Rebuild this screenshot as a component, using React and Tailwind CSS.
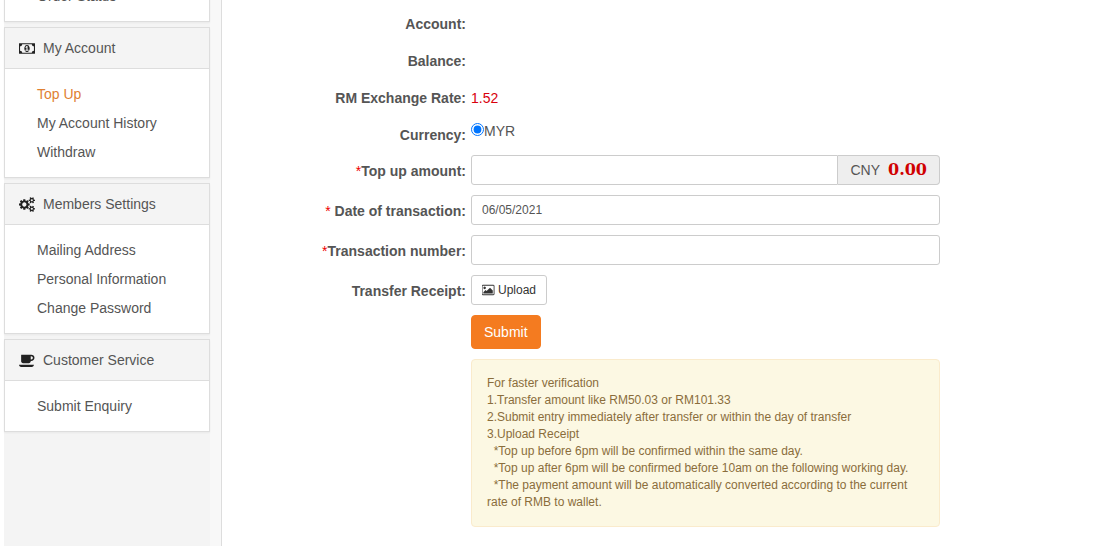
import React from 'react';

const icons = {
  money:
    'M768 1152h384v-96h-128v-448h-114l-148 137 77 80q42-37 55-57h2v288h-128v96zM1280 896q0 70-21 142t-59.5 134-101.5 101-138 39-138-39-101.5-101-59.5-134-21-142 21-142 59.5-134 101.5-101 138-39 138 39 101.5 101 59.5 134 21 142zM1792 1152v-512q-106 0-181-75t-75-181h-1152q0 106-75 181t-181 75v512q106 0 181 75t75 181h1152q0-106 75-181t181-75zM1920 320v1152q0 26-19 45t-45 19h-1792q-26 0-45-19t-19-45v-1152q0-26 19-45t45-19h1792q26 0 45 19t19 45z',
  cogs:
    'M896 896q0-106-75-181t-181-75-181 75-75 181 75 181 181 75 181-75 75-181zm768 512q0-52-38-90t-90-38-90 38-38 90q0 53 37.5 90.5t90.5 37.5 90.5-37.5 37.5-90.5zm0-1024q0-52-38-90t-90-38-90 38-38 90q0 53 37.5 90.5t90.5 37.5 90.5-37.5 37.5-90.5zm-384 421v185q0 10-7 19.5t-16 10.5l-155 24q-11 35-32 76 34 48 90 115 7 11 7 20 0 12-7 19-23 30-82.5 89.5t-78.5 59.5q-11 0-21-7l-115-90q-37 19-77 31-11 108-23 155-7 24-30 24h-186q-11 0-20-7.5t-10-17.5l-23-153q-34-10-75-31l-118 89q-7 7-20 7-11 0-21-8-144-133-144-160 0-9 7-19 10-14 41-53t47-61q-23-44-35-82l-152-24q-10-1-17-9.5t-7-19.5v-185q0-10 7-19.5t16-10.5l155-24q11-35 32-76-34-48-90-115-7-11-7-20 0-12 7-20 22-30 82-89t79-59q11 0 21 7l115 90q34-18 77-32 11-108 23-154 7-24 30-24h186q11 0 20 7.5t10 17.5l23 153q34 10 75 31l118-89q8-7 20-7 11 0 21 8 144 133 144 160 0 8-7 19-12 16-42 54t-45 60q23 48 34 82l152 23q10 2 17 10.5t7 19.5zm640 533v140q0 16-149 31-12 27-30 52 51 113 51 138 0 4-4 7-122 71-124 71-8 0-46-47t-52-68q-20 2-30 2t-30-2q-14 21-52 68t-46 47q-2 0-124-71-4-3-4-7 0-25 51-138-18-25-30-52-149-15-149-31v-140q0-16 149-31 13-29 30-52-51-113-51-138 0-4 4-7 4-2 35-20t59-34 30-16q8 0 46 46.5t52 67.5q20-2 30-2t30 2q51-71 92-112l6-2q4 0 124 70 4 3 4 7 0 25-51 138 17 23 30 52 149 15 149 31zm0-1024v140q0 16-149 31-12 27-30 52 51 113 51 138 0 4-4 7-122 71-124 71-8 0-46-47t-52-68q-20 2-30 2t-30-2q-14 21-52 68t-46 47q-2 0-124-71-4-3-4-7 0-25 51-138-18-25-30-52-149-15-149-31v-140q0-16 149-31 13-29 30-52-51-113-51-138 0-4 4-7 4-2 35-20t59-34 30-16q8 0 46 46.5t52 67.5q20-2 30-2t30 2q51-71 92-112l6-2q4 0 124 70 4 3 4 7 0 25-51 138 17 23 30 52 149 15 149 31z',
  coffee:
    'M1664 576q0-80-56-136t-136-56h-64v384h64q80 0 136-56t56-136zm-1664 832h1792q0 106-75 181t-181 75h-1280q-106 0-181-75t-75-181zm1856-832q0 159-112.5 271.5t-271.5 112.5h-64v32q0 92-66 158t-158 66h-704q-92 0-158-66t-66-158v-736q0-26 19-45t45-19h1152q159 0 271.5 112.5t112.5 271.5z',
  picture:
    'M576 576q0 80-56 136t-136 56-136-56-56-136 56-136 136-56 136 56 56 136zm1024 384v448h-1408v-192l320-320 160 160 512-512zm96-704h-1600q-13 0-22.5 9.5t-9.5 22.5v1216q0 13 9.5 22.5t22.5 9.5h1600q13 0 22.5-9.5t9.5-22.5v-1216q0-13-9.5-22.5t-22.5-9.5zm160 32v1216q0 66-47 113t-113 47h-1600q-66 0-113-47t-47-113v-1216q0-66 47-113t113-47h1600q66 0 113 47t47 113z',
};

const Icon = ({ name, className }) => (
  <svg viewBox="0 0 1920 1792" className={className} fill="currentColor" aria-hidden="true">
    <path d={icons[name]} />
  </svg>
);

const menus = [
  { title: 'My Account', icon: 'money', links: ['Top Up', 'My Account History', 'Withdraw'] },
  { title: 'Members Settings', icon: 'cogs', links: ['Mailing Address', 'Personal Information', 'Change Password'] },
  { title: 'Customer Service', icon: 'coffee', links: ['Submit Enquiry'] },
];

const MenuLink = ({ text, active }) => (
  <li>
    <a href="#" className={`block leading-[29px] ${active ? 'text-[#e08032]' : 'text-[#555]'}`}>
      {text}
    </a>
  </li>
);

const Sidebar = () => (
  <aside className="ml-1 flex shrink-0 border-r border-[#ddd] bg-[#f8f8f8] pr-[11px]">
    <nav className="flex w-[206px] flex-col gap-[5px] bg-[#f4f4f4]">
      {/* tail of the orders menu, scrolled past the top */}
      <ul className="-mt-[18px] border border-t-0 border-[#ddd] bg-white pb-2.5 pl-8 shadow-xs">
        <MenuLink text="Order Status" />
      </ul>
      {menus.map((menu) => (
        <section key={menu.title} className="border border-[#ddd] bg-white shadow-xs">
          <h2 className="flex items-center gap-2 border-b border-[#ddd] bg-[#f4f4f4] py-2.5 pl-3.5 leading-5 text-[#555]">
            <Icon name={menu.icon} className="h-[15px] w-4 text-[#222]" />
            {menu.title}
          </h2>
          <ul className="pt-[11px] pb-2.5 pl-8">
            {menu.links.map((link) => (
              <MenuLink key={link} text={link} active={link === 'Top Up'} />
            ))}
          </ul>
        </section>
      ))}
    </nav>
  </aside>
);

const Row = ({ label, htmlFor, required, children }) => (
  <div className="flex gap-[5px]">
    <label htmlFor={htmlFor} className="w-[244px] shrink-0 pt-1.5 text-right leading-5 font-bold">
      {required && <span className="font-normal text-[#e00]">{required}</span>}
      {label}
    </label>
    <div className="min-w-0 max-w-[469px] flex-1">{children}</div>
  </div>
);

const inputStyle = 'block h-[30px] w-full border border-[#ccc] bg-white px-2.5 text-xs text-[#555]';

const TopUpForm = () => (
  <form className="flex flex-1 flex-col gap-2.5 pt-2" onSubmit={(e) => e.preventDefault()}>
    <div className="flex flex-col gap-[11px] pb-px">
      <Row label="Account:" />
      <Row label="Balance:" />
      <Row label="RM Exchange Rate:">
        <p className="pt-1.5 leading-5 text-[#d9000d]">1.52</p>
      </Row>
    </div>
    <Row label="Currency:" htmlFor="myr">
      <div className="flex items-start pt-0.5 leading-5">
        <input id="myr" type="radio" name="currency" defaultChecked className="mt-0.5 h-[13px] w-[13px]" />
        <label htmlFor="myr">MYR</label>
      </div>
    </Row>
    <Row label="Top up amount:" htmlFor="amount" required="*">
      <div className="flex">
        <input id="amount" type="text" className={`${inputStyle} min-w-0 flex-1 rounded-l-[3px]`} />
        <span className="flex items-center gap-2 rounded-r border border-l-0 border-[#ccc] bg-[#eee] px-3 leading-5">
          CNY
          <b className="font-['DejaVu_Serif',serif] text-base leading-5 text-[#d00000]">0.00</b>
        </span>
      </div>
    </Row>
    <Row label="Date of transaction:" htmlFor="date" required="* ">
      <input id="date" type="text" defaultValue="06/05/2021" className={`${inputStyle} rounded-[3px]`} />
    </Row>
    <Row label="Transaction number:" htmlFor="number" required="*">
      <input id="number" type="text" className={`${inputStyle} rounded-[3px]`} />
    </Row>
    <Row label="Transfer Receipt:" htmlFor="receipt">
      <button id="receipt" type="button" className="flex h-[30px] items-center gap-[3px] rounded-[3px] border border-[#ccc] bg-white px-2.5 text-xs text-[#333]">
        <Icon name="picture" className="h-3 w-[13px]" />
        Upload
      </button>
    </Row>
    <Row>
      <button type="submit" className="block h-[34px] rounded border border-[#f47b20] bg-[#f47b20] px-3 leading-5 text-white">
        Submit
      </button>
    </Row>
    <Row>
      <div className="rounded border border-[#faebcc] bg-[#fcf8e3] p-[15px] text-xs leading-[17px] text-[#8a6d3b]">
        <p>For faster verification</p>
        <p>1.Transfer amount like RM50.03 or RM101.33</p>
        <p>2.Submit entry immediately after transfer or within the day of transfer</p>
        <p>3.Upload Receipt</p>
        <p>&nbsp;&nbsp;*Top up before 6pm will be confirmed within the same day.</p>
        <p>&nbsp;&nbsp;*Top up after 6pm will be confirmed before 10am on the following working day.</p>
        <p>&nbsp;&nbsp;*The payment amount will be automatically converted according to the current rate of RMB to wallet.</p>
      </div>
    </Row>
  </form>
);

export default function App() {
  return (
    <div className="flex h-screen overflow-hidden bg-white font-['Liberation_Sans',Arial,sans-serif] text-sm text-[#555]">
      <Sidebar />
      <TopUpForm />
    </div>
  );
}
